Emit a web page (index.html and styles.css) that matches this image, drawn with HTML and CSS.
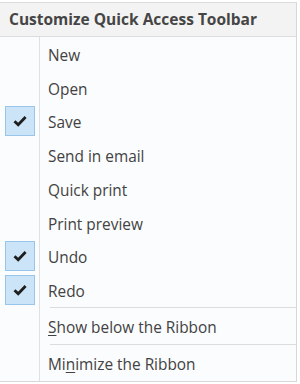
FILE: index.html
```html
<!DOCTYPE html>
<html>
<head>
<meta charset="utf-8">
<link rel="stylesheet" href="styles.css">
</head>
<body>
<div class="menu">
  <div class="header">Customize Quick Access Toolbar</div>
  <div class="items">
    <div class="row"><span class="box"></span><span class="label">New</span></div>
    <div class="row"><span class="box"></span><span class="label">Open</span></div>
    <div class="row"><span class="box checked"><svg viewBox="0 0 14 12" width="14" height="12"><path d="M1.5 6.2 L5.2 9.8 L12.6 2" fill="none" stroke="#1e1e1e" stroke-width="2.8"/></svg></span><span class="label">Save</span></div>
    <div class="row"><span class="box"></span><span class="label">Send in email</span></div>
    <div class="row"><span class="box"></span><span class="label">Quick print</span></div>
    <div class="row"><span class="box"></span><span class="label">Print preview</span></div>
    <div class="row"><span class="box checked"><svg viewBox="0 0 14 12" width="14" height="12"><path d="M1.5 6.2 L5.2 9.8 L12.6 2" fill="none" stroke="#1e1e1e" stroke-width="2.8"/></svg></span><span class="label">Undo</span></div>
    <div class="row"><span class="box checked"><svg viewBox="0 0 14 12" width="14" height="12"><path d="M1.5 6.2 L5.2 9.8 L12.6 2" fill="none" stroke="#1e1e1e" stroke-width="2.8"/></svg></span><span class="label">Redo</span></div>
    <div class="sep"></div>
    <div class="row tall"><span class="box"></span><span class="label"><u>S</u>how below the Ribbon</span></div>
    <div class="sep"></div>
    <div class="row last"><span class="box"></span><span class="label">Mi<u>n</u>imize the Ribbon</span></div>
  </div>
</div>
</body>
</html>
```
FILE: styles.css
```css
html, body {
  margin: 0;
  padding: 0;
  background: #ffffff;
}
body {
  width: 300px;
  height: 384px;
  overflow: hidden;
  font-family: "Open Sans", "Noto Sans", sans-serif;
}
.menu {
  margin-top: 2px;
  width: 296px;
  background: #fbfcfd;
  border-top: 1px solid #dadbdc;
  border-right: 1px solid #d6d7d8;
  border-bottom: 1px solid #d6d7d8;
}
.header {
  height: 33px;
  line-height: 33px;
  padding-left: 9px;
  background: #f3f3f3;
  border-bottom: 1px solid #dcdcdc;
  font-weight: 700;
  font-size: 15.5px;
  color: #454545;
  white-space: nowrap;
}
.items {
  background: linear-gradient(to right, transparent 39px, #dfe0e1 39px, #dfe0e1 40px, transparent 40px);
}
.row {
  height: 33.75px;
  display: flex;
  align-items: center;
}
.row.tall {
  height: 36px;
}
.row.last {
  height: 36px;
}
.box {
  flex: none;
  width: 30px;
  height: 30px;
  margin-left: 5px;
  box-sizing: border-box;
  display: flex;
  align-items: center;
  justify-content: center;
}
.box.checked {
  background: #cce4f7;
  border: 1px solid #99c5ea;
}
.label {
  margin-left: 13px;
  margin-top: 3px;
  font-size: 15.4px;
  color: #424242;
  white-space: nowrap;
}
.label u {
  text-underline-offset: 2px;
}
.sep {
  height: 1px;
  margin-left: 50px;
  background: #dcdcdc;
}
```
